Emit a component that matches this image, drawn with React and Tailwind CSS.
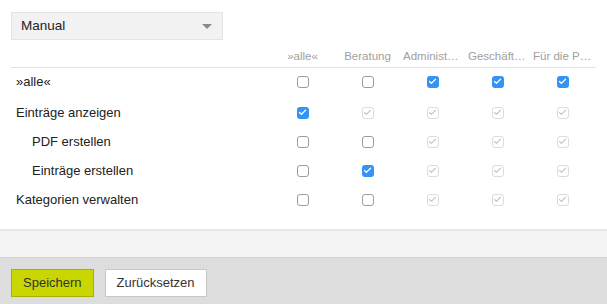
import { Check } from 'lucide-react';

const columns = ['»alle«', 'Beratung', 'Administration', 'Geschäftsführung', 'Für die Presse'];

// state per cell: 0 = leer, 1 = angehakt, 2 = geerbt (deaktiviert)
const rows = [
  { label: '»alle«', indent: false, first: true, cells: [0, 0, 1, 1, 1] },
  { label: 'Einträge anzeigen', indent: false, cells: [1, 2, 2, 2, 2] },
  { label: 'PDF erstellen', indent: true, cells: [0, 0, 2, 2, 2] },
  { label: 'Einträge erstellen', indent: true, cells: [0, 1, 2, 2, 2] },
  { label: 'Kategorien verwalten', indent: false, cells: [0, 0, 2, 2, 2] },
];

const Box = ({ state }) => {
  if (state === 1) {
    return (
      <span className="w-[12px] h-[12px] rounded-[3px] bg-[#3593f6] flex items-center justify-center">
        <Check size={9} strokeWidth={3.5} className="text-white" />
      </span>
    );
  }
  if (state === 2) {
    return (
      <span className="w-[12px] h-[12px] rounded-[3px] border border-[#dcdcdc] bg-white flex items-center justify-center">
        <Check size={9} strokeWidth={3} className="text-[#c6c6c6]" />
      </span>
    );
  }
  return <span className="w-[12px] h-[12px] rounded-[3px] border border-[#9c9c9c] bg-white" />;
};

const App = () => {
  return (
    <div
      className="w-[607px] h-[304px] bg-white flex flex-col text-[#222]"
      style={{ fontFamily: '"Liberation Sans", Arial, sans-serif' }}
    >
      <div className="px-[11px] pt-[12px] flex-1">
        <div className="w-[212px] h-[28px] bg-[#f2f2f2] border border-[#e4e4e4] flex items-center justify-between pl-[9px] pr-[10px]">
          <span className="text-[13.5px] text-[#222]">Manual</span>
          <span className="w-0 h-0 border-l-[5px] border-r-[5px] border-t-[5px] border-l-transparent border-r-transparent border-t-[#8a8a8a]" />
        </div>

        <div className="mt-[5px] w-[585px]">
          <div className="flex h-[23px] items-center border-b border-[#e2e2e2]">
            <div className="w-[259px]" />
            {columns.map((c) => (
              <div key={c} className="w-[65px] px-[3px] text-center text-[11.5px] text-[#a0a0a0] truncate leading-[22px]">
                {c}
              </div>
            ))}
          </div>

          {rows.map((r) => (
            <div
              key={r.label}
              className={`flex items-center ${r.first ? 'h-[27px] mb-[3px]' : 'h-[29px]'}`}
            >
              <div className={`w-[259px] text-[13px] text-[#222] ${r.indent ? 'pl-[21px]' : 'pl-[5px]'}`}>
                {r.label}
              </div>
              {r.cells.map((s, i) => (
                <div key={i} className="w-[65px] flex justify-center">
                  <Box state={s} />
                </div>
              ))}
            </div>
          ))}
        </div>
      </div>

      <div className="h-[2px] bg-[#e8e8e8]" />
      <div className="h-[27px] bg-[#f3f3f3] border-b border-[#d2d2d2]" />
      <div className="h-[46px] bg-[#dddddd] flex items-start gap-[11px] px-[11px] pt-[11px]">
        <button className="h-[28px] px-[11px] bg-[#c9d600] border border-[#a8b000] text-[13px] text-[#333]">
          Speichern
        </button>
        <button className="h-[28px] px-[11px] bg-white border border-[#c8c8c8] text-[13px] text-[#333]">
          Zurücksetzen
        </button>
      </div>
    </div>
  );
};

export default App;
